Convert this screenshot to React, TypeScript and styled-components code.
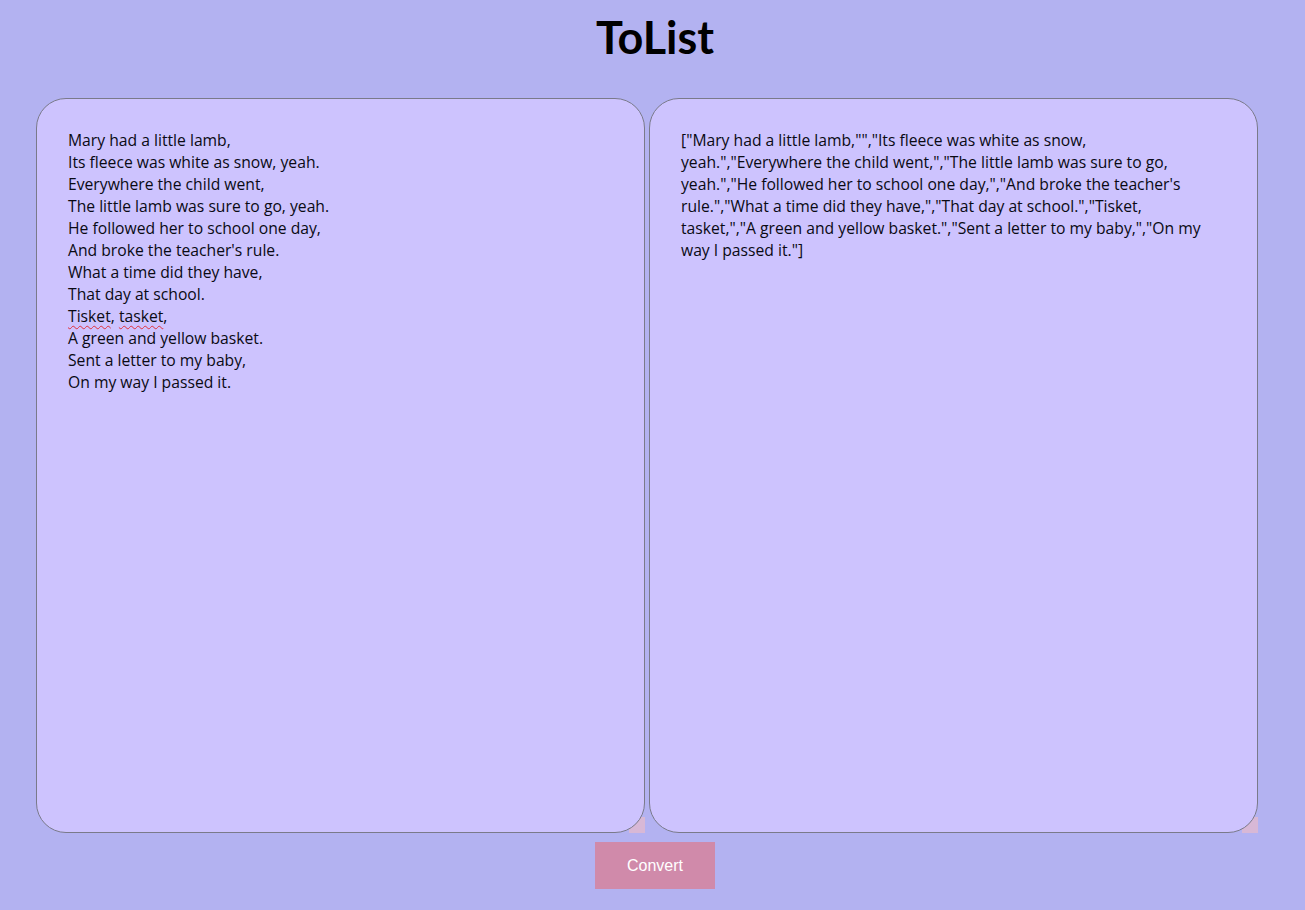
import React from "react";
import styled, { createGlobalStyle } from "styled-components";

const Global = createGlobalStyle`
  html, body { margin: 0; padding: 0; background: #b3b2f1; }
  body { font-family: "Open Sans", Lato, sans-serif; }
`;

const Page = styled.div`
  min-height: 910px;
  background: #b3b2f1;
  display: flex;
  flex-direction: column;
  padding-left: 5px;
  box-sizing: border-box;
`;

const Title = styled.h1`
  margin: 0;
  padding-top: 11px;
  height: 98px;
  box-sizing: border-box;
  text-align: center;
  font-family: Lato, sans-serif;
  font-weight: 700;
  font-size: 45px;
  line-height: 52px;
  color: #000;
`;

const Panels = styled.div`
  display: flex;
  gap: 4px;
  padding-left: 31px;
`;

const Cell = styled.div`
  position: relative;
  width: 609px;
  height: 735px;
  &::before {
    content: "";
    position: absolute;
    right: 0;
    bottom: 0;
    width: 16px;
    height: 16px;
    background: #d8b8d6;
  }
`;

const Area = styled.div`
  position: relative;
  box-sizing: border-box;
  width: 100%;
  height: 100%;
  border: 1px solid #7a7a8a;
  border-radius: 30px;
  background: #cdc3fe;
  padding: 30px 41px 30px 31px;
  font-family: "Open Sans", sans-serif;
  font-size: 15.7px;
  line-height: 22px;
  color: #0a0a14;
  white-space: pre-wrap;
  word-wrap: break-word;
  overflow: hidden;
`;

const Misspelled = styled.span`
  text-decoration: underline wavy #e0303a;
  text-decoration-thickness: 1px;
  text-underline-offset: 3px;
`;

const Footer = styled.div`
  display: flex;
  justify-content: center;
  padding-top: 9px;
`;

const Button = styled.button`
  width: 120px;
  height: 47px;
  border: none;
  background: #d08aaa;
  color: #fff;
  font-family: "Liberation Sans", Arial, sans-serif;
  font-size: 16px;
  cursor: pointer;
`;

const leftText = [
  "Mary had a little lamb,",
  "Its fleece was white as snow, yeah.",
  "Everywhere the child went,",
  "The little lamb was sure to go, yeah.",
  "He followed her to school one day,",
  "And broke the teacher's rule.",
  "What a time did they have,",
  "That day at school.",
];
const leftTail = [
  "A green and yellow basket.",
  "Sent a letter to my baby,",
  "On my way I passed it.",
];

const rightText =
  '["Mary had a little lamb,"","Its fleece was white as snow, yeah.","Everywhere the child went,","The little lamb was sure to go, yeah.","He followed her to school one day,","And broke the teacher\'s rule.","What a time did they have,","That day at school.","Tisket, tasket,","A green and yellow basket.","Sent a letter to my baby,","On my way I passed it."]';

export default function App() {
  return (
    <Page>
      <Global />
      <Title>ToList</Title>
      <Panels>
        <Cell>
          <Area>
            {leftText.join("\n") + "\n"}
            <Misspelled>Tisket</Misspelled>, <Misspelled>tasket</Misspelled>,
            {"\n" + leftTail.join("\n")}
          </Area>
        </Cell>
        <Cell>
          <Area>{rightText}</Area>
        </Cell>
      </Panels>
      <Footer>
        <Button>Convert</Button>
      </Footer>
    </Page>
  );
}
